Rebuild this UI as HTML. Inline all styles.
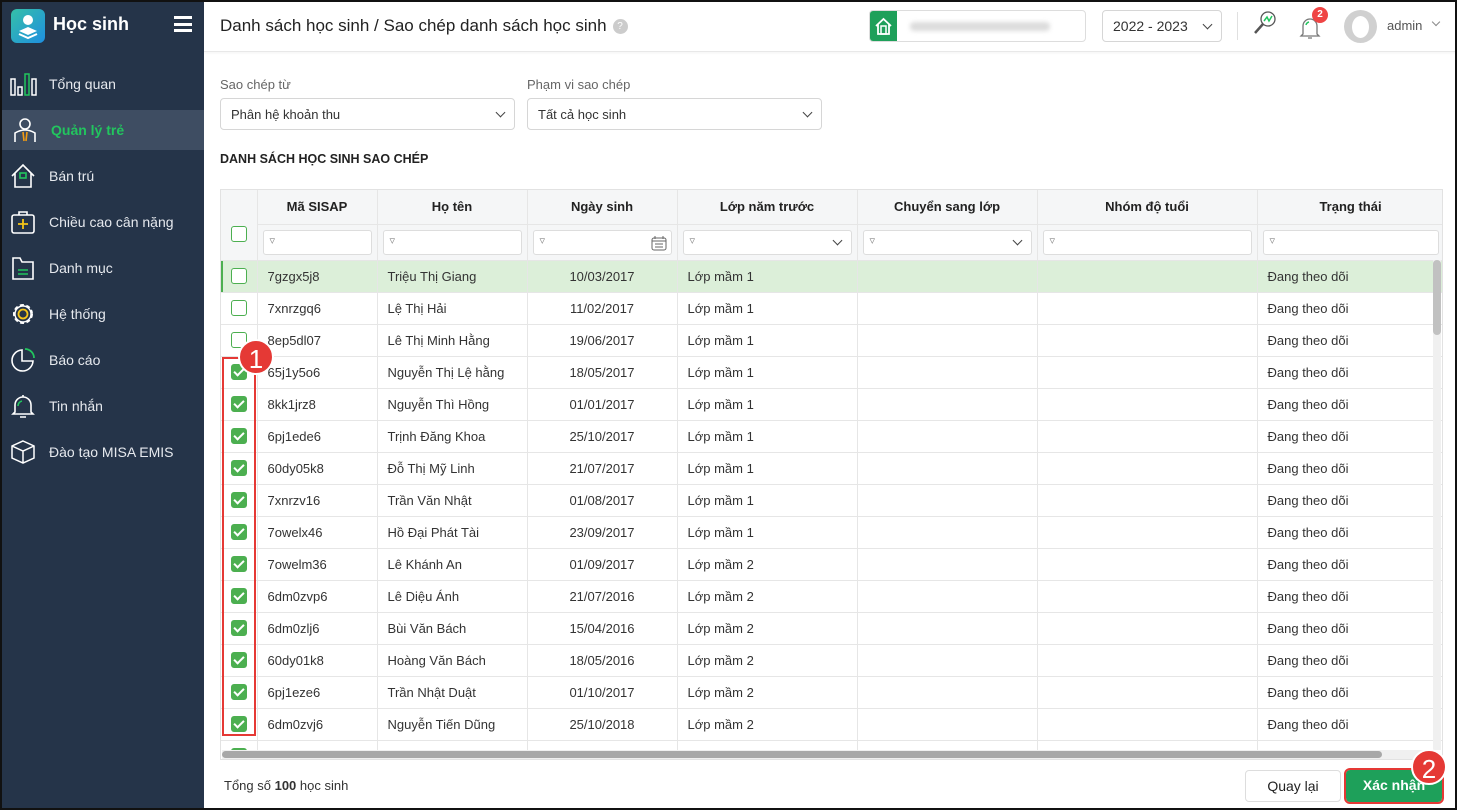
<!DOCTYPE html>
<html><head><meta charset="utf-8">
<style>
*{box-sizing:border-box;margin:0;padding:0}
body{width:1457px;height:810px;overflow:hidden;font-family:"Liberation Sans",sans-serif;font-size:13px;color:#333;background:#fff;position:relative}
.frame{position:absolute;left:0;top:0;width:1457px;height:810px;border:2px solid #111;z-index:50;pointer-events:none}
.sb{position:absolute;left:0;top:0;width:204px;height:810px;background:#253449;color:#e6e9ee}
.logo{position:absolute;left:11px;top:9px;width:34px;height:34px;border-radius:6px;background:linear-gradient(135deg,#35c0a8,#1e8fe0)}
.brand{position:absolute;left:53px;top:14px;font-size:18px;font-weight:bold;color:#fff}
.ham{position:absolute;left:174px;top:16px;width:18px;height:16px;border-top:3px solid #fff;border-bottom:3px solid #fff}
.ham:after{content:"";position:absolute;left:0;top:4px;width:18px;height:3px;background:#fff}
.mi{position:absolute;left:0;width:204px;height:40px;line-height:40px;padding-left:49px;font-size:14px}
.mi svg{position:absolute;left:10px;top:7px}
.act{background:#3e4d62;border-left:2px solid #1fb35a;color:#22c55e;font-weight:bold}
.top{position:absolute;left:204px;top:0;right:0;height:52px;border-bottom:1px solid #e8e8e8;box-shadow:0 1px 3px rgba(0,0,0,.05)}
.title{position:absolute;left:16px;top:16px;font-size:17px;color:#222}
.q{display:inline-block;width:15px;height:15px;border-radius:50%;background:#ccc;color:#fff;font-size:10px;text-align:center;line-height:15px;vertical-align:2px;margin-left:6px}
.lbl{position:absolute;color:#666;font-size:13px}
.sel{position:absolute;height:32px;border:1px solid #d6d6d6;border-radius:4px;padding:8px 10px;font-size:13px;color:#333}
.chev{position:absolute;right:10px;top:10px;width:7px;height:7px;border-right:1.6px solid #444;border-bottom:1.6px solid #444;transform:rotate(45deg)}
.grid{position:absolute;left:220px;top:189px;width:1223px;height:571px;border:1px solid #e2e2e2;overflow:hidden}
table{border-collapse:collapse;table-layout:fixed;width:1223px}
td,th{border-right:1px solid #e6e6e6;border-bottom:1px solid #e6e6e6;height:32px;padding:0 10px;white-space:nowrap;overflow:hidden;font-weight:normal;font-size:13px}
th{background:#f5f6f7;font-weight:bold;color:#222;height:34px}
tr.f td{background:#f5f6f7;height:36px;padding:3px 5px}
.fi{height:25px;border:1px solid #ddd;border-radius:3px;background:#fff;position:relative}
.fi:before{content:"▿";position:absolute;left:6px;top:3px;font-size:11px;color:#888}
.cb{display:inline-block;width:16px;height:16px;border:1.6px solid #4caf50;border-radius:3px;vertical-align:middle;background:#fff}
.cb.on{background:#4caf50;position:relative}
.cb.on:after{content:"";position:absolute;left:4px;top:1px;width:4px;height:8px;border-right:2px solid #fff;border-bottom:2px solid #fff;transform:rotate(45deg)}
td.c{text-align:center;padding:0}
tr.hl td{background:#dcefd9}
tr.hl td:first-child{box-shadow:inset 2px 0 #4caf50}
.ce{text-align:center}
.vs{position:absolute;left:1433px;top:260px;width:8px;height:490px;background:#f0f0f0}
.vs i{position:absolute;left:0;top:0;width:8px;height:75px;background:#c1c1c1;border-radius:4px}
.hs{position:absolute;left:222px;top:750px;width:1210px;height:9px;background:#f0f0f0}
.hs i{position:absolute;left:0;top:1px;width:1160px;height:7px;background:#a8a8a8;border-radius:4px}
.btn{position:absolute;top:770px;height:32px;border-radius:4px;font-size:14px;text-align:center;line-height:30px}
.badge{position:absolute;width:36px;height:36px;border-radius:50%;background:#e53935;color:#fff;font-size:26px;text-align:center;line-height:36px;border:2px solid #fff}
</style></head><body>
<div class="frame"></div>
<div class="sb">
<div class="logo"><svg width="34" height="34" viewBox="0 0 34 34"><circle cx="17" cy="11" r="5" fill="#fff"/><path d="M8 22 L17 18 L26 22 L17 26Z" fill="#fff"/><path d="M8 25 L17 29 L26 25" stroke="#fff" stroke-width="2" fill="none"/></svg></div>
<div class="brand">Học sinh</div><div class="ham"></div>
<div class="mi" style="top:64px"><svg width="28" height="26"><rect x="1" y="8" width="4" height="16" fill="none" stroke="#fff" stroke-width="1.5"/><rect x="8" y="16" width="4" height="8" fill="none" stroke="#fff" stroke-width="1.5"/><rect x="15" y="3" width="4" height="21" fill="none" stroke="#22c55e" stroke-width="1.5"/><rect x="22" y="8" width="4" height="16" fill="none" stroke="#fff" stroke-width="1.5"/></svg>Tổng quan</div>
<div class="mi act" style="top:110px"><svg width="26" height="26"><circle cx="13" cy="7" r="5" fill="none" stroke="#fff" stroke-width="1.6"/><path d="M3 25 V16 Q13 10 23 16 V25" fill="none" stroke="#fff" stroke-width="1.6"/><path d="M11 15 L12 24 M15 15 L14 24" stroke="#f39c12" stroke-width="1.6"/></svg>Quản lý trẻ</div>
<div class="mi" style="top:156px"><svg width="26" height="26"><path d="M2 13 L13 2 L24 13 M5 10 V24 H21 V10" fill="none" stroke="#fff" stroke-width="1.6"/><rect x="10" y="10" width="6" height="5" fill="none" stroke="#22c55e" stroke-width="1.6"/></svg>Bán trú</div>
<div class="mi" style="top:202px"><svg width="26" height="26"><rect x="2" y="6" width="22" height="18" rx="2" fill="none" stroke="#fff" stroke-width="1.6"/><path d="M9 6 V3 H17 V6" fill="none" stroke="#fff" stroke-width="1.6"/><path d="M13 10 V20 M8 15 H18" stroke="#f5c518" stroke-width="1.8"/></svg>Chiều cao cân nặng</div>
<div class="mi" style="top:248px"><svg width="26" height="26"><path d="M3 3 H10 L12 7 H23 V24 H3Z" fill="none" stroke="#fff" stroke-width="1.6"/><path d="M8 15 H18 M8 19 H18" stroke="#22c55e" stroke-width="1.6"/></svg>Danh mục</div>
<div class="mi" style="top:294px"><svg width="26" height="26"><circle cx="13" cy="13" r="9" fill="none" stroke="#fff" stroke-width="2" stroke-dasharray="4 2.5"/><circle cx="13" cy="13" r="8" fill="none" stroke="#fff" stroke-width="1.4"/><circle cx="13" cy="13" r="4.5" fill="none" stroke="#f5c518" stroke-width="1.8"/></svg>Hệ thống</div>
<div class="mi" style="top:340px"><svg width="26" height="26"><path d="M12 3 A10.5 10.5 0 1 0 23 14 H12Z" fill="none" stroke="#fff" stroke-width="1.6"/><path d="M15 2 A9 9 0 0 1 24 11" fill="none" stroke="#22c55e" stroke-width="1.8"/></svg>Báo cáo</div>
<div class="mi" style="top:386px"><svg width="26" height="26"><path d="M5 19 V12 A8 8 0 0 1 21 12 V19 L23 21 H3Z M10 24 H16 M13 2 V4" fill="none" stroke="#fff" stroke-width="1.6"/><path d="M8 13 A5 5 0 0 1 12 8" fill="none" stroke="#22c55e" stroke-width="1.6"/></svg>Tin nhắn</div>
<div class="mi" style="top:432px"><svg width="26" height="26"><path d="M13 2 L24 7 V19 L13 24 L2 19 V7Z M2 7 L13 12 L24 7 M13 12 V24" fill="none" stroke="#fff" stroke-width="1.5"/></svg>Đào tạo MISA EMIS</div>
</div>
<div class="top">
<div class="title">Danh sách học sinh / Sao chép danh sách học sinh<span class="q">?</span></div>
<div style="position:absolute;left:665px;top:10px;width:217px;height:32px;border:1px solid #ddd;border-radius:4px;overflow:hidden"><div style="width:27px;height:32px;background:#1ea05a;position:absolute;left:0;top:0"><svg width="27" height="30"><path d="M6 15 L13.5 8 L21 15 M8 13 V23 H19 V13" fill="none" stroke="#fff" stroke-width="1.8"/><rect x="11" y="15" width="5" height="8" fill="none" stroke="#fff" stroke-width="1.5"/></svg></div><div style="position:absolute;left:40px;top:11px;width:140px;height:9px;background:#dcdcdc;border-radius:4px;filter:blur(2px)"></div></div>
<div class="sel" style="left:898px;top:10px;width:120px;font-size:14px;padding-top:7px">2022 - 2023<div class="chev"></div></div>
<div style="position:absolute;left:1033px;top:12px;width:1px;height:28px;background:#e0e0e0"></div>
<svg style="position:absolute;left:1048px;top:10px" width="26" height="26"><circle cx="16" cy="9" r="7" fill="none" stroke="#555" stroke-width="1.3"/><path d="M11 14 L3 23" stroke="#555" stroke-width="2.5"/><path d="M12 11 L15 7 L17 11 L20 6" fill="none" stroke="#22c55e" stroke-width="1.5"/></svg>
<svg style="position:absolute;left:1094px;top:12px" width="24" height="28"><path d="M5 22 V14 A7 7 0 0 1 19 14 V22 L21 24 H3Z M10 26 H14" fill="none" stroke="#777" stroke-width="1.3"/><path d="M8 13 A4 4 0 0 1 11 10" fill="none" stroke="#22c55e" stroke-width="1.5"/></svg>
<div style="position:absolute;left:1108px;top:7px;width:16px;height:16px;border-radius:50%;background:#ef4444;color:#fff;font-size:10px;font-weight:bold;text-align:center;line-height:16px">2</div>
<div style="position:absolute;left:1140px;top:10px;width:33px;height:33px;border-radius:50%;background:#d0d0d0"><div style="position:absolute;left:8px;top:6px;width:17px;height:22px;border-radius:50%;background:#fff"></div></div>
<div style="position:absolute;left:1183px;top:18px;font-size:13px;color:#555">admin</div>
<div style="position:absolute;left:1229px;top:19px;width:6px;height:6px;border-right:1px solid #888;border-bottom:1px solid #888;transform:rotate(45deg)"></div>
</div>
<div class="lbl" style="left:220px;top:77px">Sao chép từ</div>
<div class="lbl" style="left:527px;top:77px">Phạm vi sao chép</div>
<div class="sel" style="left:220px;top:98px;width:295px">Phân hệ khoản thu<div class="chev"></div></div>
<div class="sel" style="left:527px;top:98px;width:295px">Tất cả học sinh<div class="chev"></div></div>
<div style="position:absolute;left:220px;top:152px;font-size:12.5px;font-weight:bold;color:#222">DANH SÁCH HỌC SINH SAO CHÉP</div>
<div class="grid"><table>
<colgroup><col style="width:36px"><col style="width:120px"><col style="width:150px"><col style="width:150px"><col style="width:180px"><col style="width:180px"><col style="width:220px"><col style="width:187px"></colgroup>
<tr><th rowspan="2" style="vertical-align:bottom;padding:0 0 18px 0;text-align:center;height:70px"><span class="cb"></span></th><th>Mã SISAP</th><th>Họ tên</th><th>Ngày sinh</th><th>Lớp năm trước</th><th>Chuyển sang lớp</th><th>Nhóm độ tuổi</th><th>Trạng thái</th></tr>
<tr class="f"><td><div class="fi"></div></td><td><div class="fi"></div></td><td><div class="fi"><svg style="position:absolute;right:4px;top:4px" width="16" height="16"><rect x="1" y="3" width="14" height="12" rx="2" fill="none" stroke="#666"/><path d="M1 6 H15 M4 1 V4 M12 1 V4 M4 9 H12 M4 12 H12" stroke="#666"/></svg></div></td><td><div class="fi"><div class="chev" style="top:6px;right:10px"></div></div></td><td><div class="fi"><div class="chev" style="top:6px;right:10px"></div></div></td><td><div class="fi"></div></td><td><div class="fi"></div></td></tr>
<tr class="hl"><td class="c"><span class="cb"></span></td><td>7gzgx5j8</td><td>Triệu Thị Giang</td><td class="ce">10/03/2017</td><td>Lớp mầm 1</td><td></td><td></td><td>Đang theo dõi</td></tr>
<tr><td class="c"><span class="cb"></span></td><td>7xnrzgq6</td><td>Lệ Thị Hải</td><td class="ce">11/02/2017</td><td>Lớp mầm 1</td><td></td><td></td><td>Đang theo dõi</td></tr>
<tr><td class="c"><span class="cb"></span></td><td>8ep5dl07</td><td>Lê Thị Minh Hằng</td><td class="ce">19/06/2017</td><td>Lớp mầm 1</td><td></td><td></td><td>Đang theo dõi</td></tr>
<tr><td class="c"><span class="cb on"></span></td><td>65j1y5o6</td><td>Nguyễn Thị Lệ hằng</td><td class="ce">18/05/2017</td><td>Lớp mầm 1</td><td></td><td></td><td>Đang theo dõi</td></tr>
<tr><td class="c"><span class="cb on"></span></td><td>8kk1jrz8</td><td>Nguyễn Thì Hồng</td><td class="ce">01/01/2017</td><td>Lớp mầm 1</td><td></td><td></td><td>Đang theo dõi</td></tr>
<tr><td class="c"><span class="cb on"></span></td><td>6pj1ede6</td><td>Trịnh Đăng Khoa</td><td class="ce">25/10/2017</td><td>Lớp mầm 1</td><td></td><td></td><td>Đang theo dõi</td></tr>
<tr><td class="c"><span class="cb on"></span></td><td>60dy05k8</td><td>Đỗ Thị Mỹ Linh</td><td class="ce">21/07/2017</td><td>Lớp mầm 1</td><td></td><td></td><td>Đang theo dõi</td></tr>
<tr><td class="c"><span class="cb on"></span></td><td>7xnrzv16</td><td>Trần Văn Nhật</td><td class="ce">01/08/2017</td><td>Lớp mầm 1</td><td></td><td></td><td>Đang theo dõi</td></tr>
<tr><td class="c"><span class="cb on"></span></td><td>7owelx46</td><td>Hồ Đại Phát Tài</td><td class="ce">23/09/2017</td><td>Lớp mầm 1</td><td></td><td></td><td>Đang theo dõi</td></tr>
<tr><td class="c"><span class="cb on"></span></td><td>7owelm36</td><td>Lê Khánh An</td><td class="ce">01/09/2017</td><td>Lớp mầm 2</td><td></td><td></td><td>Đang theo dõi</td></tr>
<tr><td class="c"><span class="cb on"></span></td><td>6dm0zvp6</td><td>Lê Diệu Ánh</td><td class="ce">21/07/2016</td><td>Lớp mầm 2</td><td></td><td></td><td>Đang theo dõi</td></tr>
<tr><td class="c"><span class="cb on"></span></td><td>6dm0zlj6</td><td>Bùi Văn Bách</td><td class="ce">15/04/2016</td><td>Lớp mầm 2</td><td></td><td></td><td>Đang theo dõi</td></tr>
<tr><td class="c"><span class="cb on"></span></td><td>60dy01k8</td><td>Hoàng Văn Bách</td><td class="ce">18/05/2016</td><td>Lớp mầm 2</td><td></td><td></td><td>Đang theo dõi</td></tr>
<tr><td class="c"><span class="cb on"></span></td><td>6pj1eze6</td><td>Trần Nhật Duật</td><td class="ce">01/10/2017</td><td>Lớp mầm 2</td><td></td><td></td><td>Đang theo dõi</td></tr>
<tr><td class="c"><span class="cb on"></span></td><td>6dm0zvj6</td><td>Nguyễn Tiến Dũng</td><td class="ce">25/10/2018</td><td>Lớp mầm 2</td><td></td><td></td><td>Đang theo dõi</td></tr>
<tr><td class="c"><span class="cb on"></span></td><td></td><td></td><td></td><td></td><td></td><td></td><td></td></tr>
</table></div>
<div class="vs"><i></i></div>
<div class="hs"><i></i></div>
<div style="position:absolute;left:222px;top:357px;width:34px;height:379px;border:2px solid #e53935"></div>
<div class="badge" style="left:238px;top:339px">1</div>
<div style="position:absolute;left:224px;top:778px;font-size:13px">Tổng số <b>100</b> học sinh</div>
<div class="btn" style="left:1245px;width:96px;border:1px solid #ddd;color:#222">Quay lại</div>
<div class="btn" style="left:1346px;width:96px;background:#1ea05a;color:#fff;font-weight:bold;outline:2px solid #e53935">Xác nhận</div>
<div class="badge" style="left:1411px;top:749px">2</div>
</body></html>
